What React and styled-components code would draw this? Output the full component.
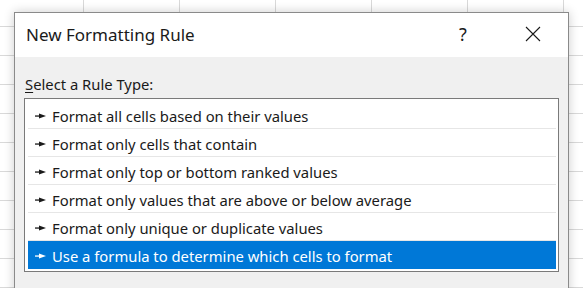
import React from 'react'
import styled, { createGlobalStyle } from 'styled-components'

const GlobalStyle = createGlobalStyle`
  html, body {
    margin: 0;
    padding: 0;
    background: #ffffff;
    overflow: hidden;
  }
`

const Sheet = styled.div`
  width: 583px;
  height: 288px;
  box-sizing: border-box;
  padding: 12px 0 0 14px;
  overflow: hidden;
  background-color: #ffffff;
  background-image:
    linear-gradient(to right, #d9d9d9 1px, transparent 1px),
    linear-gradient(to bottom, #d9d9d9 1px, transparent 1px);
  background-size: 96px 29px;
  background-position: 83px 26px;
  font-family: "Segoe UI", "Noto Sans", "Liberation Sans", sans-serif;
`

const Dialog = styled.div`
  width: 555px;
  height: 300px;
  box-sizing: border-box;
  border: 1px solid #8a8a8a;
  background: #f0f0f0;
  box-shadow: 0 0 10px rgba(0, 0, 0, 0.2);
  display: flex;
  flex-direction: column;
`

const TitleBar = styled.div`
  height: 44px;
  background: #ffffff;
  display: flex;
  align-items: center;
  padding-left: 11px;
`

const Title = styled.div`
  flex: 1;
  font-size: 17px;
  color: #1a1a1a;
  padding-bottom: 2px;
`

const TitleButton = styled.div`
  width: 70px;
  display: flex;
  justify-content: center;
  align-items: center;
  font-size: 18px;
  color: #1a1a1a;
  padding-bottom: 2px;
`

const Body = styled.div`
  padding: 17px 9px 0 9px;
`

const Label = styled.div`
  font-size: 14.8px;
  color: #1a1a1a;
  margin-left: 1px;
  height: 24px;

  u {
    text-decoration-thickness: 1px;
    text-underline-offset: 2px;
  }
`

const ListBox = styled.div`
  width: 535px;
  box-sizing: border-box;
  border: 1px solid #7a7a7a;
  background: #ffffff;
  padding: 2px 2px 2px 3px;
`

const Row = styled.div`
  height: 28px;
  box-sizing: border-box;
  display: flex;
  align-items: center;
  padding: 2px 0 0 7px;
  font-size: 14.8px;
  color: ${p => (p.$selected ? '#ffffff' : '#1a1a1a')};
  background: ${p => (p.$selected ? '#0078d7' : 'transparent')};
  border-bottom: 1px solid ${p => (p.$selected ? '#0078d7' : '#e6e6e6')};
`

const Bullet = styled.svg`
  width: 11px;
  height: 8px;
  margin-right: 6px;
  flex-shrink: 0;
`

function Arrow({ color }) {
  return (
    <Bullet viewBox="0 0 11 8">
      <rect x="0" y="3.4" width="5" height="1.3" fill={color} />
      <polygon points="4,1.5 11,4 4,6.5" fill={color} />
    </Bullet>
  )
}

const rules = [
  'Format all cells based on their values',
  'Format only cells that contain',
  'Format only top or bottom ranked values',
  'Format only values that are above or below average',
  'Format only unique or duplicate values',
  'Use a formula to determine which cells to format',
]

export default function App() {
  const selected = 5
  return (
    <>
      <GlobalStyle />
      <Sheet>
        <Dialog>
          <TitleBar>
            <Title>New Formatting Rule</Title>
            <TitleButton>?</TitleButton>
            <TitleButton>
              <svg width="16" height="16" viewBox="0 0 16 16">
                <path d="M1 1 L15 15 M15 1 L1 15" stroke="#1a1a1a" strokeWidth="1.1" fill="none" />
              </svg>
            </TitleButton>
          </TitleBar>
          <Body>
            <Label><u>S</u>elect a Rule Type:</Label>
            <ListBox>
              {rules.map((r, i) => (
                <Row key={i} $selected={i === selected}>
                  <Arrow color={i === selected ? '#ffffff' : '#1a1a1a'} />
                  {r}
                </Row>
              ))}
            </ListBox>
          </Body>
        </Dialog>
      </Sheet>
    </>
  )
}
